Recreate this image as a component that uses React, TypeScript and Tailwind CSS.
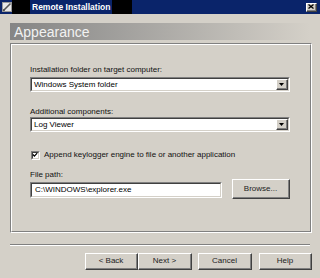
import React from "react";

const font = { fontFamily: '"Liberation Sans", Arial, sans-serif' };

function Raised({ className = "", children }: { className?: string; children?: React.ReactNode }) {
  return (
    <div className={`border-t border-l border-t-white border-l-white border-r border-b border-r-[#404040] border-b-[#404040] bg-[#d4d0c8] ${className}`}>
      <div className="w-full h-full border-r border-b border-r-[#808080] border-b-[#808080] flex items-center justify-center">
        {children}
      </div>
    </div>
  );
}

function Sunken({ className = "", children }: { className?: string; children?: React.ReactNode }) {
  return (
    <div className={`border-t border-l border-t-[#808080] border-l-[#808080] border-r border-b border-r-white border-b-white ${className}`}>
      <div className="w-full h-full border-t border-l border-t-[#404040] border-l-[#404040] border-r border-b border-r-[#d4d0c8] border-b-[#d4d0c8] bg-white flex items-center">
        {children}
      </div>
    </div>
  );
}

function Combo({ value }: { value: string }) {
  return (
    <Sunken className="w-[260px] h-[15px]">
      <span className="flex-1 pl-[2px] text-[8px] leading-[8px] text-black">{value}</span>
      <Raised className="w-[12px] h-[11px] mr-[0px]">
        <svg width="5" height="3" viewBox="0 0 5 3"><path d="M0 0H5L2.5 3Z" fill="#000" /></svg>
      </Raised>
    </Sunken>
  );
}

function Btn({ label, w }: { label: string; w: string }) {
  return (
    <Raised className={`${w} h-[17px]`}>
      <span className="text-[8px] leading-[8px] text-[#222]">{label}</span>
    </Raised>
  );
}

export default function App() {
  return (
    <div className="w-[320px] h-[278px] bg-[#d4d0c8] overflow-hidden flex flex-col relative" style={font}>
      {/* title bar */}
      <div className="h-[14px] bg-[#0a246a] flex items-center shrink-0">
        <div className="ml-[2px] w-[10px] h-[10px]">
          <svg width="10" height="10" viewBox="0 0 10 10">
            <rect x="0" y="0" width="10" height="10" fill="#e8e8e8" />
            <rect x="0.5" y="0.5" width="9" height="9" fill="none" stroke="#9a9a9a" />
            <path d="M1.5 8.5L8.5 1.5" stroke="#555" strokeWidth="1.6" />
            <path d="M1 9L3 8.5L1.5 7Z" fill="#333" />
          </svg>
        </div>
        <div className="w-[18px] h-full bg-black" />
        <div className="h-full flex items-center px-[2px]">
          <span className="text-white font-bold text-[8.5px] leading-[9px]">Remote Installation</span>
        </div>
        <div className="w-[20px] h-full bg-black" />
        <div className="flex-1" />
        <Raised className="w-[11px] h-[9px] mr-[3px]">
          <svg width="6" height="5" viewBox="0 0 6 5">
            <path d="M0.5 0.5L5.5 4.5M5.5 0.5L0.5 4.5" stroke="#000" strokeWidth="1.3" />
          </svg>
        </Raised>
      </div>

      {/* header */}
      <div className="mt-[9px] ml-[10px] w-[300px] h-[17px] bg-linear-to-r from-[#858585] to-[#d4d0c8] flex items-center shrink-0">
        <span className="ml-[4px] text-[14px] leading-[14px] text-[#f2f2f2]">Appearance</span>
      </div>

      {/* group box */}
      <div className="mt-[3px] ml-[10px] w-[302px] h-[190px] border-t border-l border-t-[#808080] border-l-[#808080] border-r border-b border-r-white border-b-white shrink-0">
        <div className="w-full h-full border-t border-l border-t-white border-l-white border-r border-b border-r-[#808080] border-b-[#808080] pl-[18px] pt-[20px] flex flex-col">
          <div className="h-[10px] text-[8px] leading-[10px] text-[#111]">Installation folder on target computer:</div>
          <div className="mt-[2px]"><Combo value="Windows System folder" /></div>

          <div className="mt-[15px] h-[10px] text-[8px] leading-[10px] text-[#111]">Additional components:</div>
          <div><Combo value="Log Viewer" /></div>

          <div className="mt-[18px] h-[10px] flex items-center">
            <Sunken className="w-[9px] h-[9px] ml-[1px]">
              <svg width="7" height="7" viewBox="0 0 7 7" className="-ml-[1px] -mt-[1px]">
                <path d="M1 3.5L2.8 5.3L6 1.8" stroke="#000" strokeWidth="1.4" fill="none" />
              </svg>
            </Sunken>
            <span className="ml-[4px] text-[8px] leading-[10px] text-[#111]">Append keylogger engine to file or another application</span>
          </div>

          <div className="mt-[11px] h-[8px] text-[8px] leading-[8px] text-[#111]">File path:</div>
          <div className="flex items-start">
            <Sunken className="mt-[3px] w-[192px] h-[16px]">
              <span className="pl-[3px] text-[8px] leading-[8px] text-black">C:\WINDOWS\explorer.exe</span>
            </Sunken>
            <Raised className="ml-[10px] w-[58px] h-[20px]">
              <span className="text-[8px] leading-[8px] text-[#222]">Browse...</span>
            </Raised>
          </div>
        </div>
      </div>

      {/* separator */}
      <div className="mt-[11px] ml-[10px] w-[300px] shrink-0">
        <div className="h-px bg-[#808080]" />
        <div className="h-px bg-white" />
      </div>

      {/* buttons */}
      <div className="mt-[7px] flex pl-[85px] shrink-0">
        <Btn label="< Back" w="w-[53px]" />
        <Btn label="Next >" w="w-[54px]" />
        <div className="w-[6px]" />
        <Btn label="Cancel" w="w-[54px]" />
        <div className="w-[7px]" />
        <Btn label="Help" w="w-[53px]" />
      </div>
    </div>
  );
}
